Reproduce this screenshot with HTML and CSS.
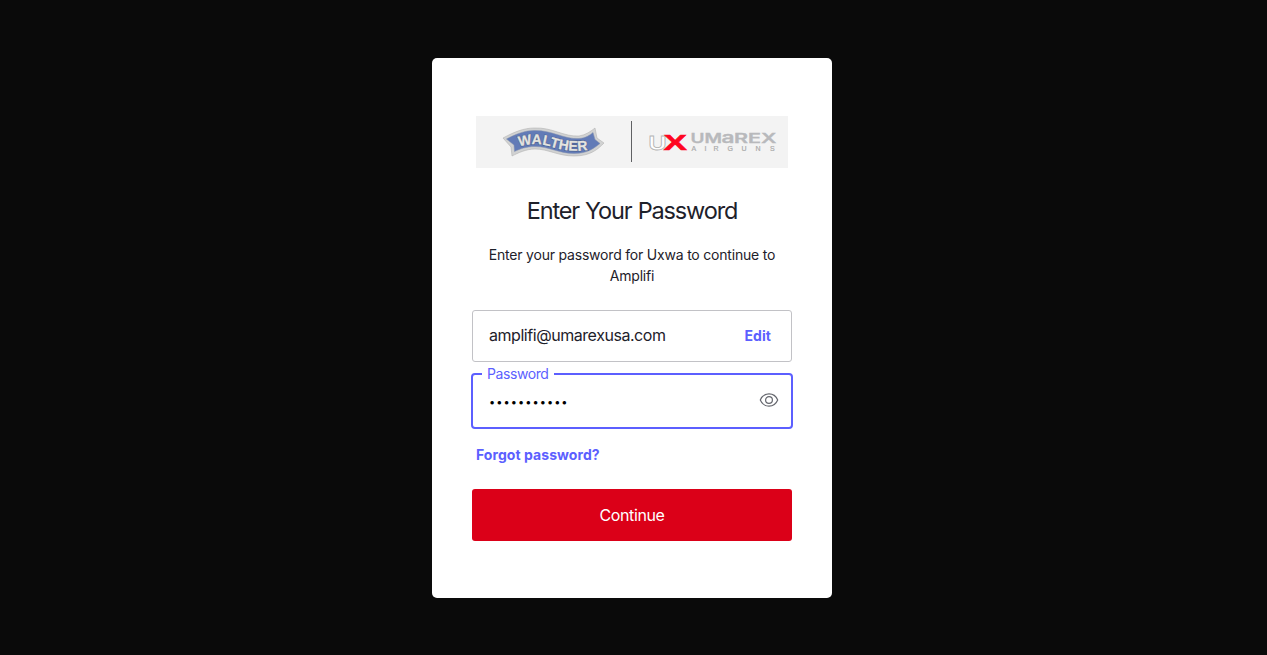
FILE: index.html
```html
<!DOCTYPE html>
<html lang="en">
<head>
<meta charset="utf-8">
<title>Enter Your Password</title>
<link rel="stylesheet" href="styles.css">
</head>
<body>
<main class="card">
  <svg class="logo" viewBox="476 116 312 52" role="img" aria-label="Walther, Umarex Airguns">
    <path class="ribbon-edge" d="M503 138C514 132 524 128 534 128C552 127 564 137 579 136C586 135 591 131 595 128L597 138L604 143C598 149 591 156 574 156C558 156 548 149 535 149C526 149 518 153 512 156L511 147Z"/>
    <path class="ribbon" d="M506.500 139C516 134 525 130.500 534 130.500C552 130 564 139.500 579 138.500C586 138 590 135 593 132.500L595 139.500L600 143.500C594 148 588 153.500 574 153.500C559 153.500 549 146.500 535 146.500C526 146.500 520 149 514.500 151.500L514 145Z"/>
    <path id="wave" class="wave" d="M519 146.500C530 143.500 540 143.500 550 146.500C562 150 573 152.500 591 149.500"/>
    <text class="walther shade"><textPath href="#wave" textLength="70" lengthAdjust="spacing">WALTHER</textPath></text>
    <text class="walther"><textPath href="#wave" textLength="70" lengthAdjust="spacing">WALTHER</textPath></text>
    <rect class="divider" x="631" y="121" width="1" height="41"/>
    <text class="ux-u" x="648.500" y="149.500" textLength="18" lengthAdjust="spacingAndGlyphs">U</text>
    <text class="ux-x" x="663.500" y="149.500" textLength="23.500" lengthAdjust="spacingAndGlyphs">X</text>
    <text class="umarex" x="690.500" y="143" textLength="31.500" lengthAdjust="spacingAndGlyphs">UM</text>
    <text class="umarex tall-a" x="721.500" y="143" textLength="13" lengthAdjust="spacingAndGlyphs">a</text>
    <text class="umarex" x="734" y="143" textLength="42.500" lengthAdjust="spacingAndGlyphs">REX</text>
    <text class="airguns" x="691.500 704.500 713.500 727.500 741.500 755.500 770" y="150.500">AIRGUNS</text>
  </svg>
  <h1 class="title">Enter Your Password</h1>
  <p class="description">Enter your password for Uxwa to continue to Amplifi</p>
  <div class="account"><span class="email">amplifi@umarexusa.com</span><a class="link edit">Edit</a></div>
  <div class="password">
    <span class="label">Password</span>
    <span class="dots">•••••••••••</span>
    <svg class="eye" viewBox="0 0 20 16"><path d="M1.300 8C3 4 6.100 1.900 10 1.900S17 4 18.700 8C17 12 13.900 14.100 10 14.100S3 12 1.300 8Z"/><circle cx="10" cy="8" r="3.400"/></svg>
  </div>
  <a class="link forgot">Forgot password?</a>
  <button class="continue">Continue</button>
</main>
</body>
</html>
```
FILE: styles.css
```css
* { box-sizing: border-box; }
body { margin: 0; padding-top: 58px; height: 655px; background: #0a0a0a; font-family: Inter, sans-serif; color: #1e212a; }
.card { width: 400px; height: 540px; margin: 0 0 0 432px; background: #fff; border-radius: 5px; padding: 58px 40px 0; display: flex; flex-direction: column; align-items: stretch; }
.logo { width: 312px; height: 52px; align-self: center; background: #f3f3f3; flex: none; }
.ribbon-edge { fill: #d1d2d2; stroke: #aaa; stroke-width: .5; }
.ribbon { fill: #627bb7; stroke: #8490ac; stroke-width: .5; }
.wave { fill: none; }
.walther { font: bold 14px "Liberation Sans", sans-serif; fill: #e4e4e0; stroke: #e4e4e0; stroke-width: .3; }
.shade { stroke: #455989; stroke-width: 1.3; }
.divider { fill: #606164; }
.ux-u { font: bold 21px "Liberation Sans", sans-serif; fill: #fff; stroke: #b4b4b4; stroke-width: .8; }
.ux-x { font: bold 22px "Liberation Sans", sans-serif; fill: #ff0520; stroke: #ff0520; stroke-width: .5; }
.umarex { font: 600 12.500px Inter, sans-serif; fill: #b8b9bc; stroke: #b8b9bc; stroke-width: .3; }
.tall-a { font-size: 15.500px; }
.airguns { font: 7px "Liberation Sans", sans-serif; fill: #aaa; stroke: #aaa; stroke-width: .2; }
.title { margin: 28px 0 0; font-size: 23.500px; font-weight: 400; line-height: 29px; text-align: center; letter-spacing: -1.13px; word-spacing: .6px; }
.description { margin: 19px 0 0; padding: 0 14px; font-size: 14px; line-height: 21px; text-align: center; letter-spacing: -.2px; }
.account { margin-top: 24px; height: 52px; flex: none; border: 1px solid #c2c2c6; border-radius: 3px; padding: 0 20px 2px 16px; display: flex; justify-content: space-between; align-items: center; font-size: 16px; letter-spacing: -.45px; }
.link { color: #5c5fff; font-size: 14px; font-weight: 700; letter-spacing: .06px; }
.edit { padding-top: 1px; }
.password { position: relative; margin: 11px -1px 0; height: 56px; flex: none; border: 2px solid #5c5fff; border-radius: 4px; padding: 0 12px 0 16px; display: flex; align-items: center; justify-content: space-between; }
.label { position: absolute; top: -10px; left: 9px; padding: 0 6px 0 5px; background: #fff; color: #5c5fff; font-size: 14px; line-height: 17px; letter-spacing: -.42px; }
.dots { color: #000; font-size: 11px; letter-spacing: 1.050px; margin-top: 1px; }
.eye { width: 20px; height: 16px; margin-top: -2px; fill: none; stroke: #65676e; stroke-width: 1.200; }
.forgot { margin: 17px 0 0 4px; line-height: 17px; }
.continue { margin-top: 26px; height: 52px; flex: none; border: 0; border-radius: 3px; background: #db0018; color: #fff; font: 16px Inter, sans-serif; letter-spacing: -.4px; }
```
